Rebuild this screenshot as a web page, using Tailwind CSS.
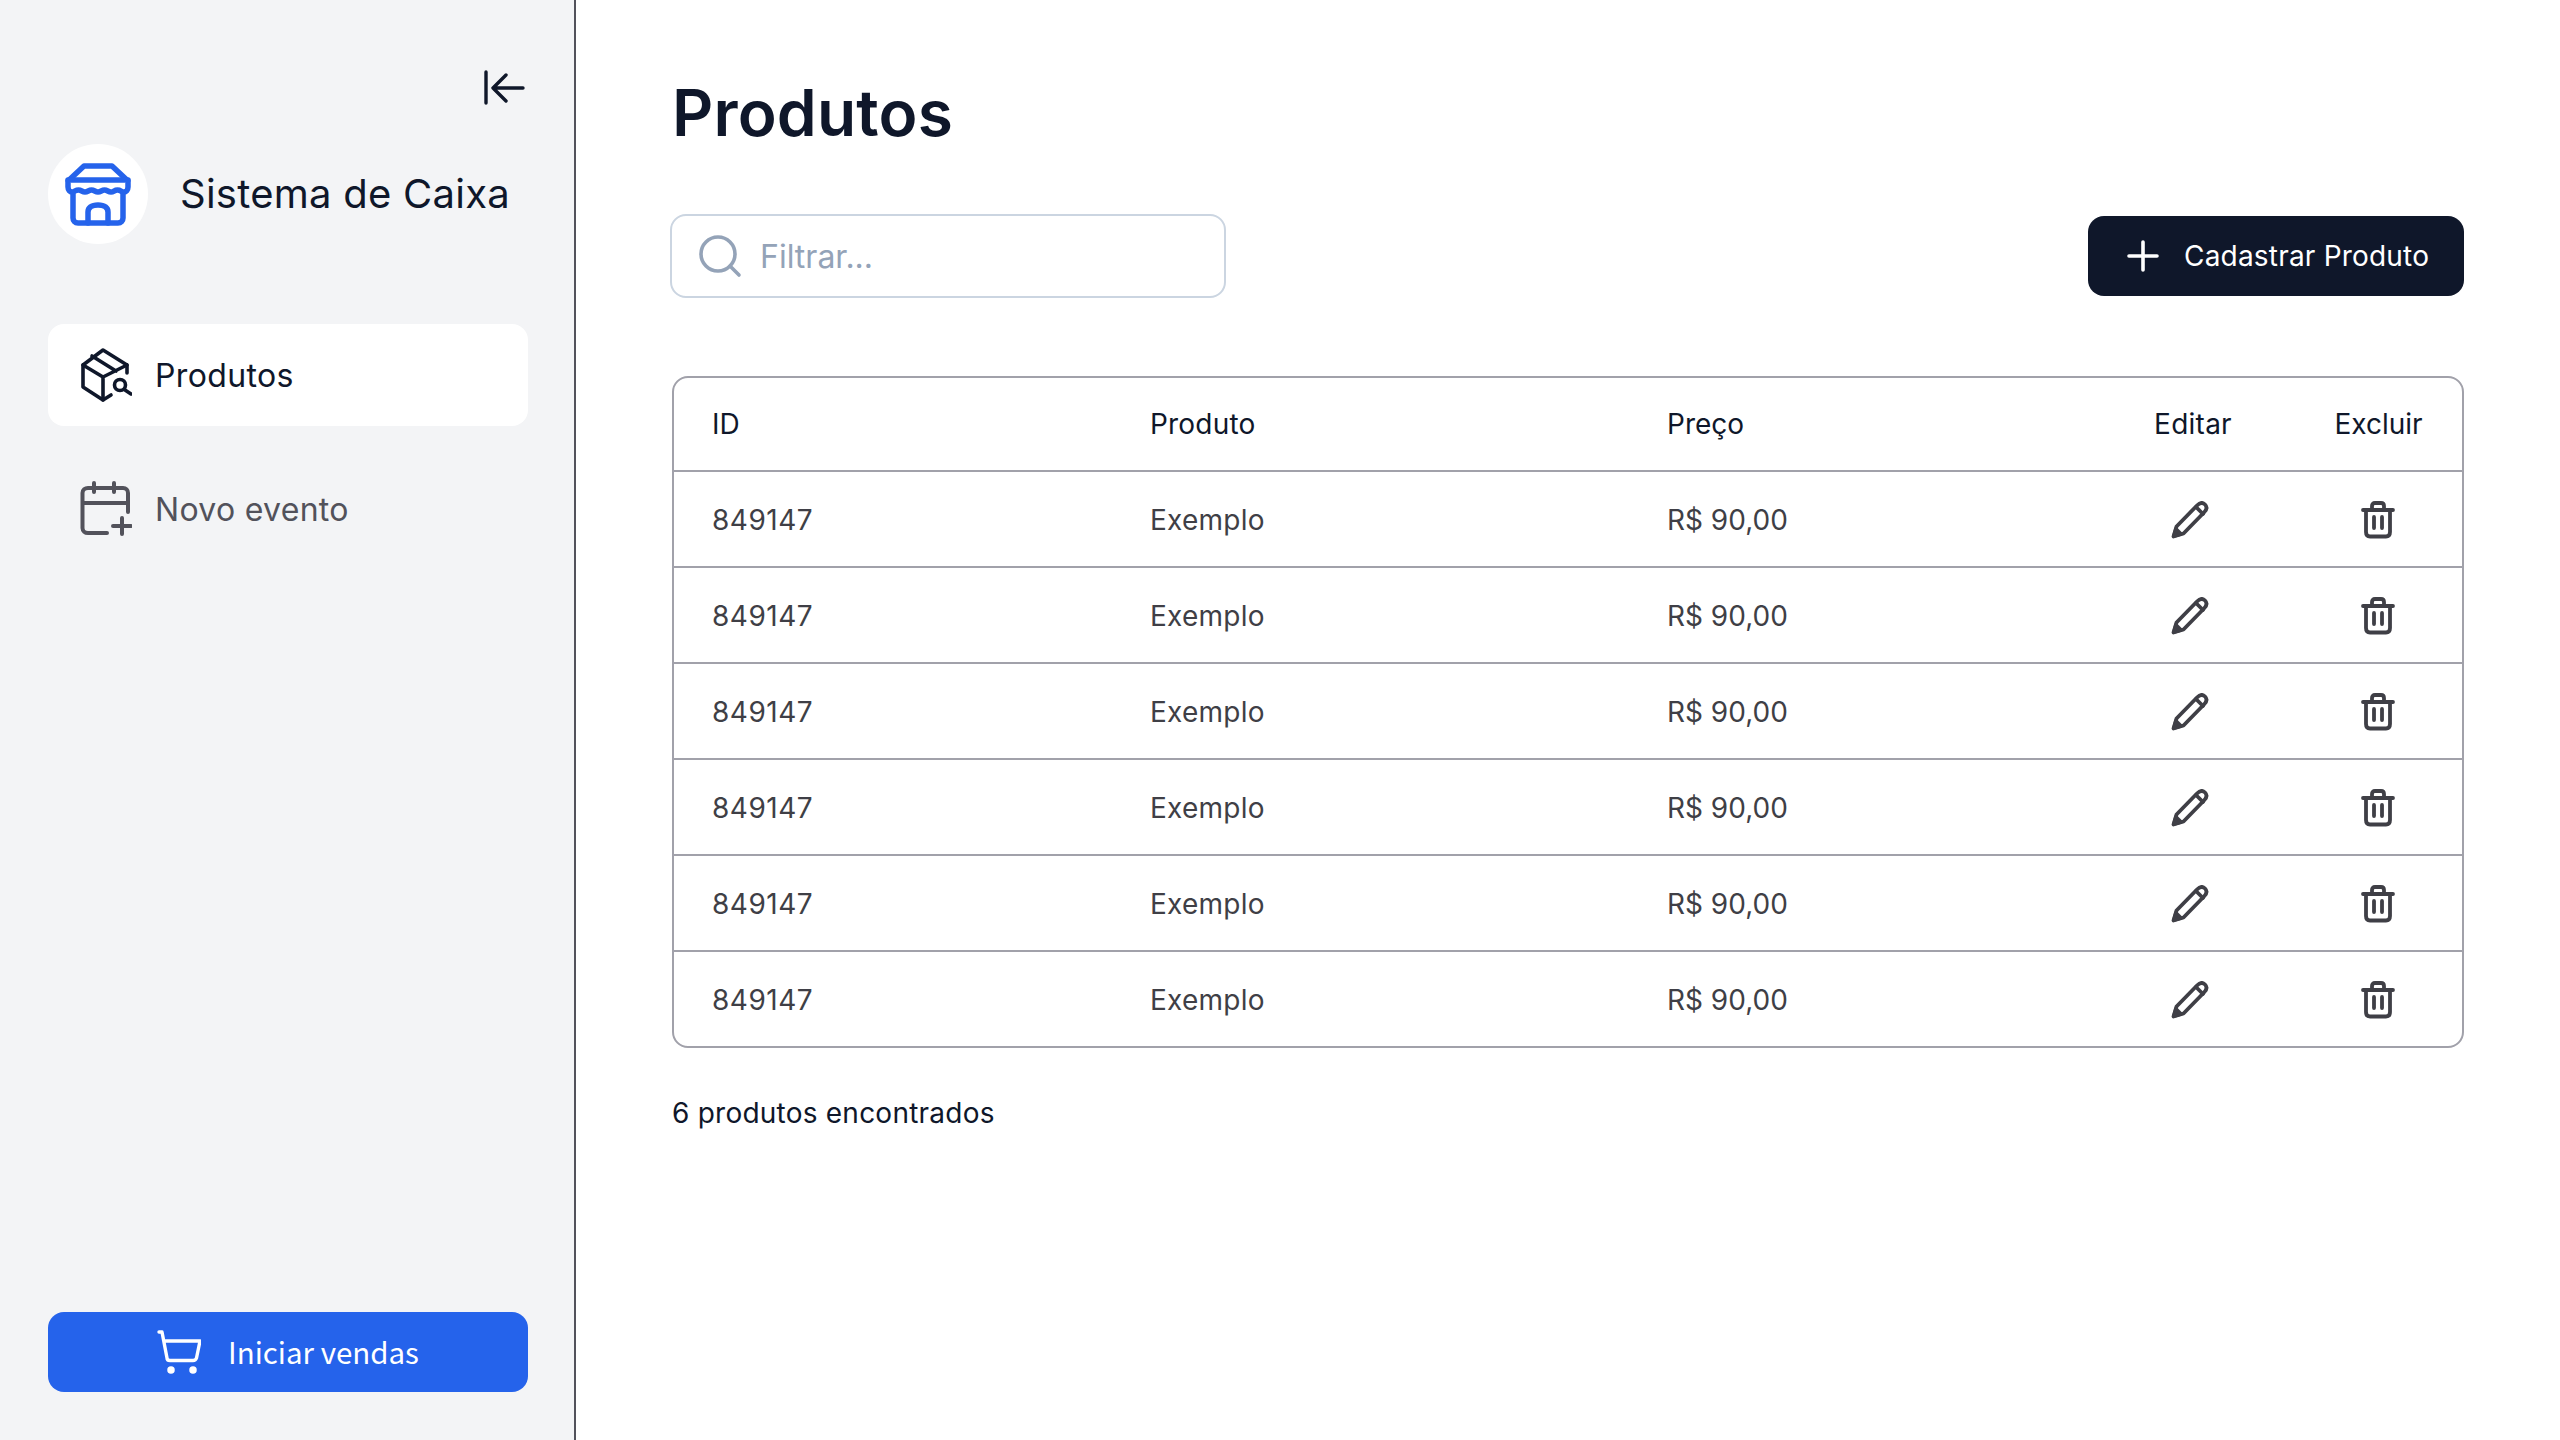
<!DOCTYPE html>
<html lang="pt-BR"><head><meta charset="utf-8"><title>Produtos</title>
<script src="https://cdn.jsdelivr.net/npm/@tailwindcss/browser@4"></script></head>
<body class="font-['Inter',sans-serif] bg-white text-[#0f172a]">
<div class="flex h-[1440px] w-[2560px] overflow-hidden">
<aside class="w-[576px] shrink-0 bg-[#f3f4f6] border-r-2 border-[#52525b] pl-12 pr-[46px] pt-[64px] pb-[48px] flex flex-col">
  <div class="flex justify-end h-[48px]">
    <svg class="w-[48px] h-[48px]" viewBox="0 0 48 48" fill="none" stroke="#0f172a" stroke-width="3.4" stroke-linecap="round" stroke-linejoin="round"><path d="M6 8v31M43 24H13M26 11 13 24l13 13"/></svg>
  </div>
  <div class="flex items-center gap-[32px] mt-[32px] h-[100px]">
    <div class="w-[100px] h-[100px] rounded-full bg-white flex items-center justify-center">
      <svg class="w-[66px] h-[64px]" viewBox="0 0 66 64" fill="none" stroke="#2563eb" stroke-width="5.5" stroke-linecap="round" stroke-linejoin="round"><path d="M19 4h28l16 15v6c0 3-2 5-4 5-3 0-3-2-6.5-2s-3.5 2-6.5 2-3.5-2-6.5-2-3.5 2-6.5 2-3.5-2-6.5-2-3.5 2-6.5 2-3.5-2-6.5-2S9 30 7 30c-2 0-4-2-4-5v-6z"/><path d="M3 18h60M8 31v25c0 3 2 5 5 5h40c3 0 5-2 5-5V31"/><path d="M23 61V50c0-4 3-7 10-7s10 3 10 7v11"/></svg>
    </div>
    <span class="text-[40px] leading-none tracking-[0.25px]">Sistema de Caixa</span>
  </div>
  <nav class="mt-[80px] flex flex-col gap-[32px]">
    <a class="h-[102px] rounded-2xl bg-white flex items-center gap-[23px] pl-[32px] text-[32px] tracking-[0.35px] text-[#0f172a]">
      <svg class="w-[52px] h-[56px]" viewBox="0 0 52 56" fill="none" stroke="currentColor" stroke-width="3.6" stroke-linecap="round" stroke-linejoin="round"><path d="M47 26v-8L23 3 3 18v22l20 13 8-5"/><path d="M3 18l20 12 24-12M23 30v23M12 9l24 15"/><circle cx="40" cy="38" r="5.5"/><path d="M45 43l6 4"/></svg>
      <span class="pt-[2px]">Produtos</span>
    </a>
    <a class="h-[102px] flex items-center gap-[23px] pl-[32px] text-[32px] tracking-[0.3px] text-[#52525b]">
      <svg class="w-[52px] h-[56px]" viewBox="0 0 52 56" fill="none" stroke="currentColor" stroke-width="4" stroke-linecap="round" stroke-linejoin="round"><path d="M27 52H8c-3 0-5.5-2-5.5-5V12c0-3 2.500-5 5.500-5h35c3 0 5 2 5 5v19M2.500 22H48M14 2v9M34 2v9M42 37v16M33 45h18"/></svg>
      <span class="pt-[2px]">Novo evento</span>
    </a>
  </nav>
  <button class="mt-auto h-[80px] rounded-2xl bg-[#2563eb] text-white flex items-center justify-center gap-[27px] text-[29.5px] font-['Noto_Sans_CJK_SC',sans-serif]">
    <svg class="w-[44px] h-[44px]" viewBox="0 0 44 44" fill="none" stroke="white" stroke-width="3.4" stroke-linecap="round" stroke-linejoin="round"><path d="M2 2h3l5 26c0 1.500 1 2.500 3 2.500h23c2 0 3-1 3.500-2.500L43 11H7"/><circle cx="14" cy="40" r="3" fill="white" stroke-width="1.500"/><circle cx="36" cy="40" r="3" fill="white" stroke-width="1.500"/></svg>
    <span class="pb-[2px]">Iniciar vendas</span>
  </button>
</aside>
<main class="flex-1 px-24 pt-[72px]">
  <h1 class="text-[64px] leading-[82px] font-semibold tracking-[0.2px]">Produtos</h1>
  <div class="flex items-center justify-between mt-[60px] h-[84px]">
    <div class="w-[556px] h-[84px] rounded-2xl border-2 border-[#cbd5e1] flex items-center pl-[26px] gap-[18px] text-[32px] text-[#94a3b8] -ml-[2px]">
      <svg class="w-[44px] h-[44px]" viewBox="0 0 44 44" fill="none" stroke="#94a3b8" stroke-width="3.6" stroke-linecap="round"><circle cx="20" cy="20" r="17"/><path d="M32 32l9 9"/></svg>
      <span class="pt-[2px]">Filtrar...</span>
    </div>
    <button class="w-[376px] h-[80px] rounded-2xl bg-[#0f172a] text-white flex items-center pl-[39px] gap-[25px] text-[28px] tracking-[0.2px]">
      <svg class="w-[32px] h-[32px]" viewBox="0 0 32 32" fill="none" stroke="white" stroke-width="3.6" stroke-linecap="round"><path d="M16 2v28M2 16h28"/></svg>
      <span>Cadastrar Produto</span>
    </button>
  </div>
  <div class="mt-[78px] border-2 border-[#a1a1aa] rounded-2xl overflow-hidden">
    <table class="w-full table-fixed border-collapse text-[28px] text-left">
      <colgroup><col class="w-[436px]"><col class="w-[517px]"><col class="w-[464px]"><col class="w-[204px]"><col></colgroup>
      <thead><tr class="h-[93px] border-b-2 border-[#a1a1aa] text-[#0f172a]"><th class="pl-[38px] font-normal">ID</th><th class="pl-10 font-normal tracking-[0.2px]">Produto</th><th class="pl-10 font-normal">Preço</th><th class="font-normal text-center tracking-[0.25px]">Editar</th><th class="font-normal text-center">Excluir</th></tr></thead>
      <tbody class="text-[#3f3f46] [&>tr]:h-[96px] [&>tr]:border-b-2 [&>tr]:border-[#a1a1aa] [&>tr:last-child]:border-b-0 [&>tr:last-child]:h-[95px] [&_td]:pt-[2px]">
        <tr><td class="pl-[38px] tracking-[0.5px]">849147</td><td class="pl-10 tracking-[0.25px]">Exemplo</td><td class="pl-10">R$ 90,00</td><td><svg class="w-[38px] h-[38px] block ml-[80px]" viewBox="0 0 38 38" fill="none" stroke="currentColor" stroke-width="3.8" stroke-linecap="round" stroke-linejoin="round"><path d="M2.500 35.500l3-10L26 4.500c3-3 6-3 8-1s2 5-1 8L12.500 32.500z"/><path d="M25 6l7 7"/><path d="M3 35l2-7 5 5z" fill="currentColor"/></svg></td><td><svg class="w-[34px] h-[38px] block ml-[66px]" viewBox="0 0 34 38" fill="none" stroke="currentColor" stroke-width="3.8" stroke-linecap="round" stroke-linejoin="round"><path d="M2 9h30M11 8V5c0-2 1-3 3-3h6c2 0 3 1 3 3v3M5 10v21c0 3 1.500 4.500 4 4.500h16c2.500 0 4-1.500 4-4.500V10M13 16v11M21 16v11"/></svg></td></tr>
        <tr><td class="pl-[38px] tracking-[0.5px]">849147</td><td class="pl-10 tracking-[0.25px]">Exemplo</td><td class="pl-10">R$ 90,00</td><td><svg class="w-[38px] h-[38px] block ml-[80px]" viewBox="0 0 38 38" fill="none" stroke="currentColor" stroke-width="3.8" stroke-linecap="round" stroke-linejoin="round"><path d="M2.500 35.500l3-10L26 4.500c3-3 6-3 8-1s2 5-1 8L12.500 32.500z"/><path d="M25 6l7 7"/><path d="M3 35l2-7 5 5z" fill="currentColor"/></svg></td><td><svg class="w-[34px] h-[38px] block ml-[66px]" viewBox="0 0 34 38" fill="none" stroke="currentColor" stroke-width="3.8" stroke-linecap="round" stroke-linejoin="round"><path d="M2 9h30M11 8V5c0-2 1-3 3-3h6c2 0 3 1 3 3v3M5 10v21c0 3 1.500 4.500 4 4.500h16c2.500 0 4-1.500 4-4.500V10M13 16v11M21 16v11"/></svg></td></tr>
        <tr><td class="pl-[38px] tracking-[0.5px]">849147</td><td class="pl-10 tracking-[0.25px]">Exemplo</td><td class="pl-10">R$ 90,00</td><td><svg class="w-[38px] h-[38px] block ml-[80px]" viewBox="0 0 38 38" fill="none" stroke="currentColor" stroke-width="3.8" stroke-linecap="round" stroke-linejoin="round"><path d="M2.500 35.500l3-10L26 4.500c3-3 6-3 8-1s2 5-1 8L12.500 32.500z"/><path d="M25 6l7 7"/><path d="M3 35l2-7 5 5z" fill="currentColor"/></svg></td><td><svg class="w-[34px] h-[38px] block ml-[66px]" viewBox="0 0 34 38" fill="none" stroke="currentColor" stroke-width="3.8" stroke-linecap="round" stroke-linejoin="round"><path d="M2 9h30M11 8V5c0-2 1-3 3-3h6c2 0 3 1 3 3v3M5 10v21c0 3 1.500 4.500 4 4.500h16c2.500 0 4-1.500 4-4.500V10M13 16v11M21 16v11"/></svg></td></tr>
        <tr><td class="pl-[38px] tracking-[0.5px]">849147</td><td class="pl-10 tracking-[0.25px]">Exemplo</td><td class="pl-10">R$ 90,00</td><td><svg class="w-[38px] h-[38px] block ml-[80px]" viewBox="0 0 38 38" fill="none" stroke="currentColor" stroke-width="3.8" stroke-linecap="round" stroke-linejoin="round"><path d="M2.500 35.500l3-10L26 4.500c3-3 6-3 8-1s2 5-1 8L12.500 32.500z"/><path d="M25 6l7 7"/><path d="M3 35l2-7 5 5z" fill="currentColor"/></svg></td><td><svg class="w-[34px] h-[38px] block ml-[66px]" viewBox="0 0 34 38" fill="none" stroke="currentColor" stroke-width="3.8" stroke-linecap="round" stroke-linejoin="round"><path d="M2 9h30M11 8V5c0-2 1-3 3-3h6c2 0 3 1 3 3v3M5 10v21c0 3 1.500 4.500 4 4.500h16c2.500 0 4-1.500 4-4.500V10M13 16v11M21 16v11"/></svg></td></tr>
        <tr><td class="pl-[38px] tracking-[0.5px]">849147</td><td class="pl-10 tracking-[0.25px]">Exemplo</td><td class="pl-10">R$ 90,00</td><td><svg class="w-[38px] h-[38px] block ml-[80px]" viewBox="0 0 38 38" fill="none" stroke="currentColor" stroke-width="3.8" stroke-linecap="round" stroke-linejoin="round"><path d="M2.500 35.500l3-10L26 4.500c3-3 6-3 8-1s2 5-1 8L12.500 32.500z"/><path d="M25 6l7 7"/><path d="M3 35l2-7 5 5z" fill="currentColor"/></svg></td><td><svg class="w-[34px] h-[38px] block ml-[66px]" viewBox="0 0 34 38" fill="none" stroke="currentColor" stroke-width="3.8" stroke-linecap="round" stroke-linejoin="round"><path d="M2 9h30M11 8V5c0-2 1-3 3-3h6c2 0 3 1 3 3v3M5 10v21c0 3 1.500 4.500 4 4.500h16c2.500 0 4-1.500 4-4.500V10M13 16v11M21 16v11"/></svg></td></tr>
        <tr><td class="pl-[38px] tracking-[0.5px]">849147</td><td class="pl-10 tracking-[0.25px]">Exemplo</td><td class="pl-10">R$ 90,00</td><td><svg class="w-[38px] h-[38px] block ml-[80px]" viewBox="0 0 38 38" fill="none" stroke="currentColor" stroke-width="3.8" stroke-linecap="round" stroke-linejoin="round"><path d="M2.500 35.500l3-10L26 4.500c3-3 6-3 8-1s2 5-1 8L12.500 32.500z"/><path d="M25 6l7 7"/><path d="M3 35l2-7 5 5z" fill="currentColor"/></svg></td><td><svg class="w-[34px] h-[38px] block ml-[66px]" viewBox="0 0 34 38" fill="none" stroke="currentColor" stroke-width="3.8" stroke-linecap="round" stroke-linejoin="round"><path d="M2 9h30M11 8V5c0-2 1-3 3-3h6c2 0 3 1 3 3v3M5 10v21c0 3 1.500 4.500 4 4.500h16c2.500 0 4-1.500 4-4.500V10M13 16v11M21 16v11"/></svg></td></tr>
      </tbody>
    </table>
  </div>
  <p class="mt-[47px] text-[28px] leading-[36px] tracking-[0.23px]">6 produtos encontrados</p>
</main>
</div>
</body></html>
